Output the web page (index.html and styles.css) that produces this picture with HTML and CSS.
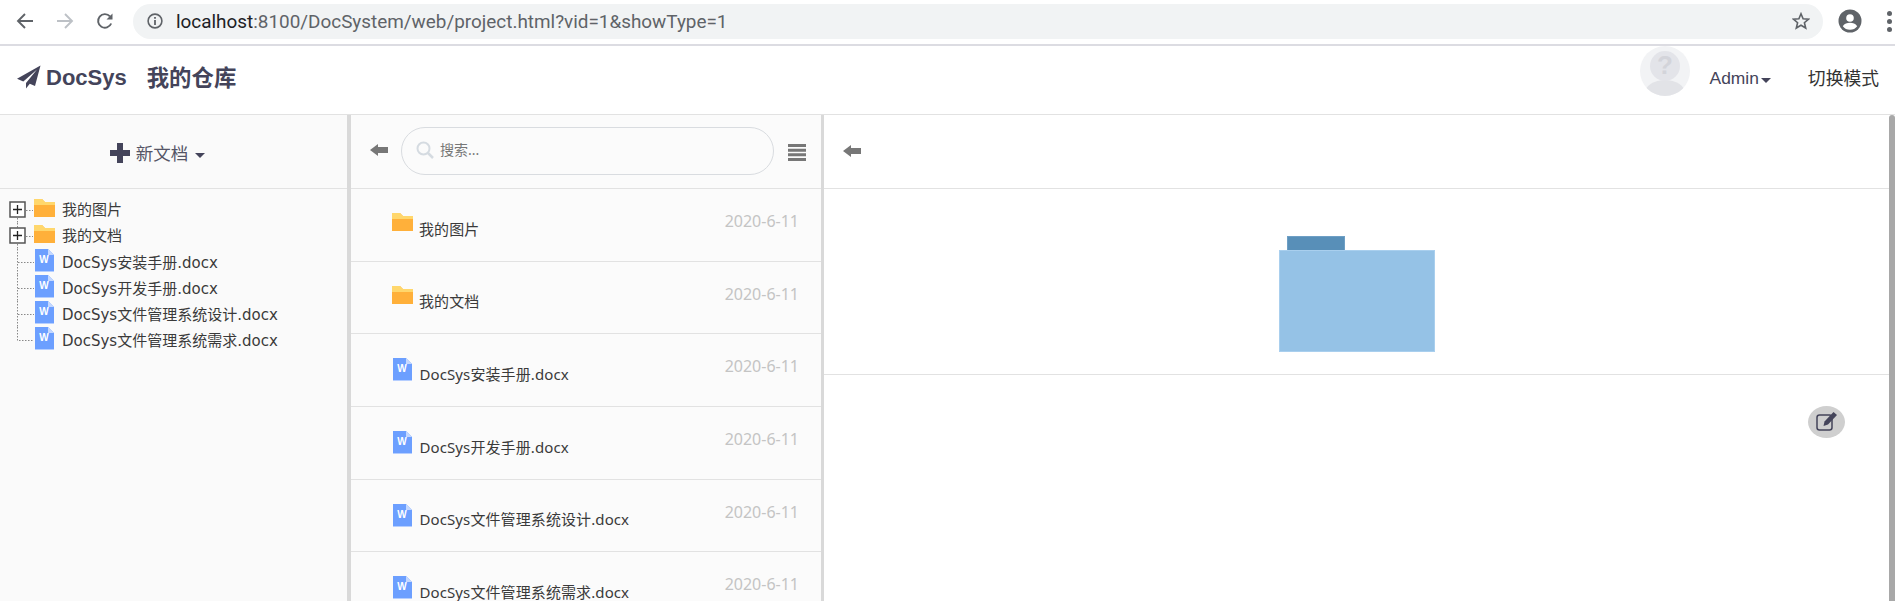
FILE: index.html
```html
<!DOCTYPE html>
<html lang="zh">
<head>
<meta charset="utf-8">
<title>DocSys</title>
<link rel="stylesheet" href="styles.css">
</head>
<body>
<svg class="defs" width="0" height="0" aria-hidden="true">
  <symbol id="folder" viewBox="0 0 21 18">
    <path d="M0 0h8l3 3h10v15H0z" fill="#ffb03a"/>
    <path d="M0 0h8l3 3h10v3H0z" fill="#ffd76c"/>
  </symbol>
  <symbol id="doc" viewBox="0 0 19 23">
    <path d="M0 0h13l6 6v17H0z" fill="#6c9fff"/>
    <path d="M13 0l6 6h-6z" fill="#c4d8ff"/>
    <path d="M0 22h19v1H0z" fill="#b5ceff"/>
  </symbol>
  <symbol id="back" viewBox="0 0 18 12">
    <path d="M0 6l8-6v3h10v6H8v3z" fill="#777"/>
  </symbol>
</svg>

<header class="browser">
  <svg class="b-icon" width="18" height="18" viewBox="0 0 18 18"><path d="M17 9H2M9 2L2 9l7 7" fill="none" stroke="#5f6368" stroke-width="1.9"/></svg>
  <svg class="b-icon" width="18" height="18" viewBox="0 0 18 18"><path d="M1 9h15M9 2l7 7-7 7" fill="none" stroke="#bdc1c6" stroke-width="1.9"/></svg>
  <svg class="b-icon" width="18" height="18" viewBox="0 0 18 18"><path d="M15.2 11.5A6.8 6.8 0 1 1 14 4.4" fill="none" stroke="#5f6368" stroke-width="1.9"/><path d="M16.5 1.5v6h-6z" fill="#5f6368"/></svg>
  <div class="omnibox">
    <svg class="info" width="16" height="16" viewBox="0 0 16 16"><circle cx="8" cy="8" r="6.9" fill="none" stroke="#5f6368" stroke-width="1.6"/><path d="M7.1 7h1.8v5H7.1zM7.1 4h1.8v1.8H7.1z" fill="#5f6368"/></svg>
    <span class="url"><span class="host">localhost</span>:8100/DocSystem/web/project.html?vid=1&amp;showType=1</span>
    <svg class="star" width="18" height="18" viewBox="0 0 18 18"><path d="M9 1.8l2.1 5 5.4.4-4.1 3.5 1.3 5.3L9 13.200l-4.700 2.800 1.300-5.300-4.100-3.500 5.400-.4z" fill="none" stroke="#5f6368" stroke-width="1.600"/></svg>
  </div>
  <svg class="account" width="24" height="24" viewBox="0 0 24 24"><circle cx="12" cy="12" r="11.500" fill="#5f6368"/><circle cx="12" cy="9" r="3.800" fill="#fff"/><path d="M4.800 17.200c1.600-2.400 4.400-3.400 7.200-3.400s5.600 1 7.200 3.400A9 9 0 0 1 12 20.800a9 9 0 0 1-7.200-3.600z" fill="#fff"/></svg>
  <span class="dots"><i></i><i></i><i></i></span>
</header>

<nav class="topnav">
  <svg class="plane" width="24" height="24" viewBox="0 0 24 24"><path d="M23.500.5L0 13.800l6.300 2.700L20 4.500 9 18v5.500l3.800-4.700 5.200 2.200z" fill="#44445a"/></svg>
  <span class="brand">DocSys</span>
  <span class="brand repo">我的仓库</span>
  <span class="nav-space"></span>
  <svg class="avatar" width="50" height="50" viewBox="0 0 50 50">
    <defs><clipPath id="avclip"><circle cx="25" cy="25" r="25"/></clipPath></defs>
    <circle cx="25" cy="25" r="25" fill="#f2f3f5"/>
    <ellipse cx="25" cy="47" rx="20" ry="13" fill="#e2e3e7" clip-path="url(#avclip)"/>
    <circle cx="25" cy="20" r="15" fill="#e3e4e9"/>
    <text x="25" y="28" text-anchor="middle" class="avatar-q">?</text>
  </svg>
  <span class="nav-link admin">Admin</span><span class="caret nav-caret"></span>
  <span class="nav-link mode">切换模式</span>
</nav>

<main class="shell">
  <aside class="tree-panel">
    <div class="panel-head new-doc">
      <svg width="20" height="20" viewBox="0 0 20 20"><path d="M7 0h6v7h7v6h-7v7H7v-7H0V7h7z" fill="#44445a"/></svg>
      <span class="new-label">新文档</span>
      <span class="caret new-caret"></span>
    </div>
    <ul class="tree">
      <li class="tree-row">
        <svg class="branch" width="34" height="26" viewBox="0 0 34 26"><path d="M17.500 21v5M26 13.500h7" class="dotted"/><rect x="10" y="5" width="15" height="15" class="box"/><path d="M13 12.500h9M17.500 8v9" class="cross"/></svg>
        <svg class="t-folder" width="21" height="18"><use href="#folder"/></svg><span class="t-name">我的图片</span>
      </li>
      <li class="tree-row">
        <svg class="branch" width="34" height="26" viewBox="0 0 34 26"><path d="M17.500 0v5M17.500 21v5M26 13.500h7" class="dotted"/><rect x="10" y="5" width="15" height="15" class="box"/><path d="M13 12.500h9M17.500 8v9" class="cross"/></svg>
        <svg class="t-folder" width="21" height="18"><use href="#folder"/></svg><span class="t-name">我的文档</span>
      </li>
      <li class="tree-row">
        <svg class="branch" width="34" height="26" viewBox="0 0 34 26"><path d="M17.500 0v26M18 13.500h16" class="dotted"/></svg>
        <svg class="t-doc" width="19" height="23"><use href="#doc"/><text x="9" y="14" text-anchor="middle" class="doc-w">W</text></svg><span class="t-name doc-name">DocSys安装手册.docx</span>
      </li>
      <li class="tree-row">
        <svg class="branch" width="34" height="26" viewBox="0 0 34 26"><path d="M17.500 0v26M18 13.500h16" class="dotted"/></svg>
        <svg class="t-doc" width="19" height="23"><use href="#doc"/><text x="9" y="14" text-anchor="middle" class="doc-w">W</text></svg><span class="t-name doc-name">DocSys开发手册.docx</span>
      </li>
      <li class="tree-row">
        <svg class="branch" width="34" height="26" viewBox="0 0 34 26"><path d="M17.500 0v26M18 13.500h16" class="dotted"/></svg>
        <svg class="t-doc" width="19" height="23"><use href="#doc"/><text x="9" y="14" text-anchor="middle" class="doc-w">W</text></svg><span class="t-name doc-name">DocSys文件管理系统设计.docx</span>
      </li>
      <li class="tree-row">
        <svg class="branch" width="34" height="26" viewBox="0 0 34 26"><path d="M17.500 0v13.500H34" class="dotted"/></svg>
        <svg class="t-doc" width="19" height="23"><use href="#doc"/><text x="9" y="14" text-anchor="middle" class="doc-w">W</text></svg><span class="t-name doc-name">DocSys文件管理系统需求.docx</span>
      </li>
    </ul>
  </aside>

  <section class="list-panel">
    <div class="panel-head search-head">
      <svg class="back-icon" width="18" height="12"><use href="#back"/></svg>
      <label class="search">
        <svg width="18" height="18" viewBox="0 0 18 18"><circle cx="7.500" cy="7.500" r="6" fill="none" stroke="#d5dbe1" stroke-width="2"/><path d="M12 12l5 5" stroke="#d5dbe1" stroke-width="2.500"/></svg>
        <span class="placeholder">搜索...</span>
      </label>
      <svg class="menu-icon" width="18" height="17" viewBox="0 0 18 17"><path d="M0 0h18v3H0zM0 4.700h18v3H0zM0 9.300h18v3H0zM0 14h18v3H0z" fill="#777"/></svg>
    </div>
    <ul class="files">
      <li class="file"><svg class="f-folder" width="21" height="18"><use href="#folder"/></svg><span class="f-name">我的图片</span><span class="f-date">2020-6-11</span></li>
      <li class="file"><svg class="f-folder" width="21" height="18"><use href="#folder"/></svg><span class="f-name">我的文档</span><span class="f-date">2020-6-11</span></li>
      <li class="file"><svg class="f-doc" width="19" height="23"><use href="#doc"/><text x="9" y="14" text-anchor="middle" class="doc-w">W</text></svg><span class="f-name">DocSys安装手册.docx</span><span class="f-date">2020-6-11</span></li>
      <li class="file"><svg class="f-doc" width="19" height="23"><use href="#doc"/><text x="9" y="14" text-anchor="middle" class="doc-w">W</text></svg><span class="f-name">DocSys开发手册.docx</span><span class="f-date">2020-6-11</span></li>
      <li class="file"><svg class="f-doc" width="19" height="23"><use href="#doc"/><text x="9" y="14" text-anchor="middle" class="doc-w">W</text></svg><span class="f-name">DocSys文件管理系统设计.docx</span><span class="f-date">2020-6-11</span></li>
      <li class="file"><svg class="f-doc" width="19" height="23"><use href="#doc"/><text x="9" y="14" text-anchor="middle" class="doc-w">W</text></svg><span class="f-name">DocSys文件管理系统需求.docx</span><span class="f-date">2020-6-11</span></li>
    </ul>
  </section>

  <section class="detail-panel">
    <div class="detail">
      <div class="panel-head detail-head"><svg class="back-icon" width="18" height="12"><use href="#back"/></svg></div>
      <div class="preview">
        <div class="big-folder"><span class="big-tab"></span><span class="big-body"></span></div>
      </div>
      <div class="doc-body">
        <span class="edit-btn">
          <svg width="22" height="20" viewBox="0 0 22 20"><rect x="1" y="3" width="15" height="15" rx="2.500" fill="none" stroke="#44445a" stroke-width="1.500"/><path d="M17.500 0l3.500 3-9 9.500-4.500 1.500 1-4.500z" fill="#44445a"/></svg>
        </span>
      </div>
    </div>
    <div class="scrollbar"></div>
  </section>
</main>
</body>
</html>
```

FILE: styles.css
```css
* { box-sizing: border-box; }
html, body { margin: 0; height: 100%; overflow: hidden; background: #fff; }
body {
  display: flex;
  flex-direction: column;
  font-family: "Noto Sans", "Noto Sans CJK SC", sans-serif;
  color: #333;
}
ul { list-style: none; margin: 0; padding: 0; }
.defs { position: absolute; }
.doc-w { font: bold 10px "Liberation Sans", sans-serif; fill: #fff; }

/* browser toolbar */
.browser {
  flex: none;
  height: 46px;
  display: flex;
  align-items: center;
  padding: 0 0 2px 16px;
  border-bottom: 2px solid #dcdce2;
}
.b-icon { margin-right: 22px; flex: none; }
.omnibox {
  flex: none;
  width: 1690px;
  margin-left: -3px;
  height: 35px;
  border-radius: 18px;
  background: #f1f3f4;
  display: flex;
  align-items: center;
  padding: 0 13px 0 14px;
}
.info { flex: none; }
.url {
  margin-left: 13px;
  font: 18.900px Roboto, sans-serif;
  color: #5f6368;
  flex: 1;
  white-space: nowrap;
}
.host { color: #202124; }
.star { flex: none; }
.account { flex: none; margin-left: 15px; }
.dots { flex: none; display: flex; flex-direction: column; gap: 3px; margin-left: 25px; }
.dots i { width: 5px; height: 5px; border-radius: 50%; background: #5f6368; display: block; }

/* site nav */
.topnav {
  flex: none;
  height: 69px;
  display: flex;
  align-items: center;
  padding: 0 16px 0 17px;
  border-bottom: 1px solid #e2e2e2;
  color: #44445a;
}
.plane { flex: none; margin-top: -7px; }
.brand {
  font: bold 22px/30px "Liberation Sans", sans-serif;
  margin-left: 5px;
  margin-top: -5px;
}
.repo { margin-left: 20px; font: bold 22.400px/30px "Noto Sans CJK SC", sans-serif; margin-top: -9px; }
.nav-space { flex: 1; }
.avatar { flex: none; margin-top: -18px; }
.nav-link { font-size: 17px; }
.admin { font-family: "Liberation Sans", sans-serif; font-size: 17.400px; margin-left: 20px; margin-top: -4px; }
.mode { margin-left: 37px; color: #333; font-size: 17.800px; margin-top: -7px; }
.caret {
  display: inline-block;
  width: 0;
  height: 0;
  border-left: 5px solid transparent;
  border-right: 5px solid transparent;
  border-top: 5px solid #44445a;
}
.nav-caret { margin: 0 0 0 2px; }

/* three panes */
.shell { flex: 1; min-height: 0; display: flex; }
.tree-panel {
  flex: none;
  width: 351px;
  background: #fafafa;
  border-right: 4px solid #d9d9d9;
}
.list-panel {
  flex: none;
  width: 473px;
  background: #fbfbfb;
  border-right: 3px solid #d9d9d9;
  overflow: hidden;
}
.detail-panel { flex: 1; min-width: 0; display: flex; }
.detail { flex: 1; min-width: 0; }
.scrollbar { flex: none; width: 6px; background: #a8a8a8; border-radius: 3px 3px 0 0; }

.panel-head {
  height: 74px;
  display: flex;
  align-items: center;
  border-bottom: 1px solid #e2e2e2;
}

/* tree */
.new-doc { justify-content: center; color: #44445a; padding-top: 3px; padding-right: 32px; }
.new-label { font-size: 17.500px; margin-left: 6px; margin-top: 2px; color: #555566; line-height: 1; }
.new-caret { margin: 5px 0 0 7px; }
.tree { padding-top: 8px; }
.tree-row { height: 26px; display: flex; align-items: center; font: 15px "DejaVu Sans", "Noto Sans CJK SC", sans-serif; white-space: nowrap; }
.branch { flex: none; }
.t-folder { flex: none; margin-top: -4px; }
.t-doc { flex: none; margin: -3px 0 0 1px; }
.t-name { margin-left: 7px; color: #3a3a3a; line-height: 1; }
.doc-name { margin-left: 8px; margin-top: 2px; }
.dotted { fill: none; stroke: #888; stroke-width: 1; stroke-dasharray: 1.500 1.500; }
.box { fill: #fff; stroke: #555; stroke-width: 1.500; }
.cross { fill: none; stroke: #222; stroke-width: 1.300; }

/* list */
.search-head { padding-left: 19px; }
.search {
  flex: none;
  width: 373px;
  height: 48px;
  margin-left: 13px;
  margin-top: -2px;
  border: 1px solid #d9dce0;
  border-radius: 24px;
  display: flex;
  align-items: center;
  padding-left: 14px;
  padding-bottom: 1px;
  color: #777;
}
.placeholder { font-size: 14px; margin-left: 6px; line-height: 1; }
.menu-icon { flex: none; margin-left: 14px; margin-top: 2px; }
.search-head > .back-icon { margin-top: -4px; }
.file {
  height: 72.700px;
  border-bottom: 1px solid #e2e2e2;
  display: flex;
  align-items: flex-start;
  padding: 24px 22px 0 41px;
  font-size: 15px;
}
.f-folder { flex: none; margin-right: 7px; }
.f-doc { flex: none; margin: 0 8.500px 0 1px; }
.f-name { flex: 1; margin-top: 4.500px; margin-left: -1px; letter-spacing: .1px; line-height: 22px; color: #3a3a3a; white-space: nowrap; }
.f-date { flex: none; color: #c4c4c4; font-size: 16px; line-height: 22px; margin-top: -3px; }

/* detail */
.detail-head { padding-left: 19px; }
.detail-head > .back-icon { margin-top: -2px; }
.preview {
  height: 186px;
  border-bottom: 1px solid #e2e2e2;
  padding: 47px 0 0 455px;
}
.big-folder { width: 156px; display: flex; flex-direction: column; align-items: flex-start; }
.big-tab { width: 58px; height: 14px; margin-left: 8px; background: #588fb8; border: 1px solid #6e9fc5; border-bottom: 0; }
.big-body { width: 156px; height: 102px; background: #95c2e6; border: 1px solid #a9cfee; }
.doc-body { display: flex; justify-content: flex-end; padding: 31px 44px 0 0; }
.edit-btn {
  width: 37px;
  height: 32px;
  border-radius: 50%;
  background: #cfcfcf;
  display: flex;
  align-items: center;
  justify-content: center;
}
.avatar-q { font: bold 26px "Liberation Sans", sans-serif; fill: #d3d4da; }
```
